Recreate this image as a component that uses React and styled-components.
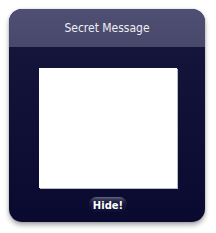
import React from "react";
import styled, { createGlobalStyle } from "styled-components";

const Global = createGlobalStyle`
  html, body { margin: 0; padding: 0; background: #ffffff; }
  body { width: 216px; height: 233px; overflow: hidden; }
`;

const Page = styled.div`
  padding: 9px 0 0 9px;
`;

const Card = styled.div`
  width: 196px;
  height: 213px;
  border-radius: 13px;
  overflow: hidden;
  display: flex;
  flex-direction: column;
  background: linear-gradient(#17173d, #0a0a30);
  box-shadow: 0 3px 5px rgba(0, 0, 0, 0.35), 0 0 2px rgba(0, 0, 0, 0.2);
`;

const Header = styled.div`
  height: 38px;
  display: flex;
  align-items: center;
  justify-content: center;
  background: linear-gradient(#4e4f72, #47486a);
  color: #eeeef4;
  font-family: "DejaVu Sans Condensed", "DejaVu Sans", sans-serif;
  font-size: 12px;
  padding-bottom: 1px;
  box-sizing: border-box;
`;

const Body = styled.div`
  flex: 1;
  display: flex;
  flex-direction: column;
  align-items: center;
  padding-top: 21px;
  padding-left: 2px;
`;

const Screen = styled.div`
  width: 138px;
  height: 120px;
  background: #ffffff;
  box-shadow: 1px 1px 0 #b9b9c8;
`;

const Button = styled.button`
  margin-top: 9px;
  width: 38px;
  height: 15px;
  border: none;
  border-radius: 8px;
  padding: 0;
  background: linear-gradient(#6a6b88 0px, #3a3b58 2px, #17183a 6px, #0e0f32);
  color: #ffffff;
  font-family: "DejaVu Sans", sans-serif;
  font-weight: bold;
  font-size: 10px;
  line-height: 15px;
  padding-top: 1px;
`;

export default function App() {
  return (
    <Page>
      <Global />
      <Card>
        <Header>Secret Message</Header>
        <Body>
          <Screen />
          <Button>Hide!</Button>
        </Body>
      </Card>
    </Page>
  );
}
